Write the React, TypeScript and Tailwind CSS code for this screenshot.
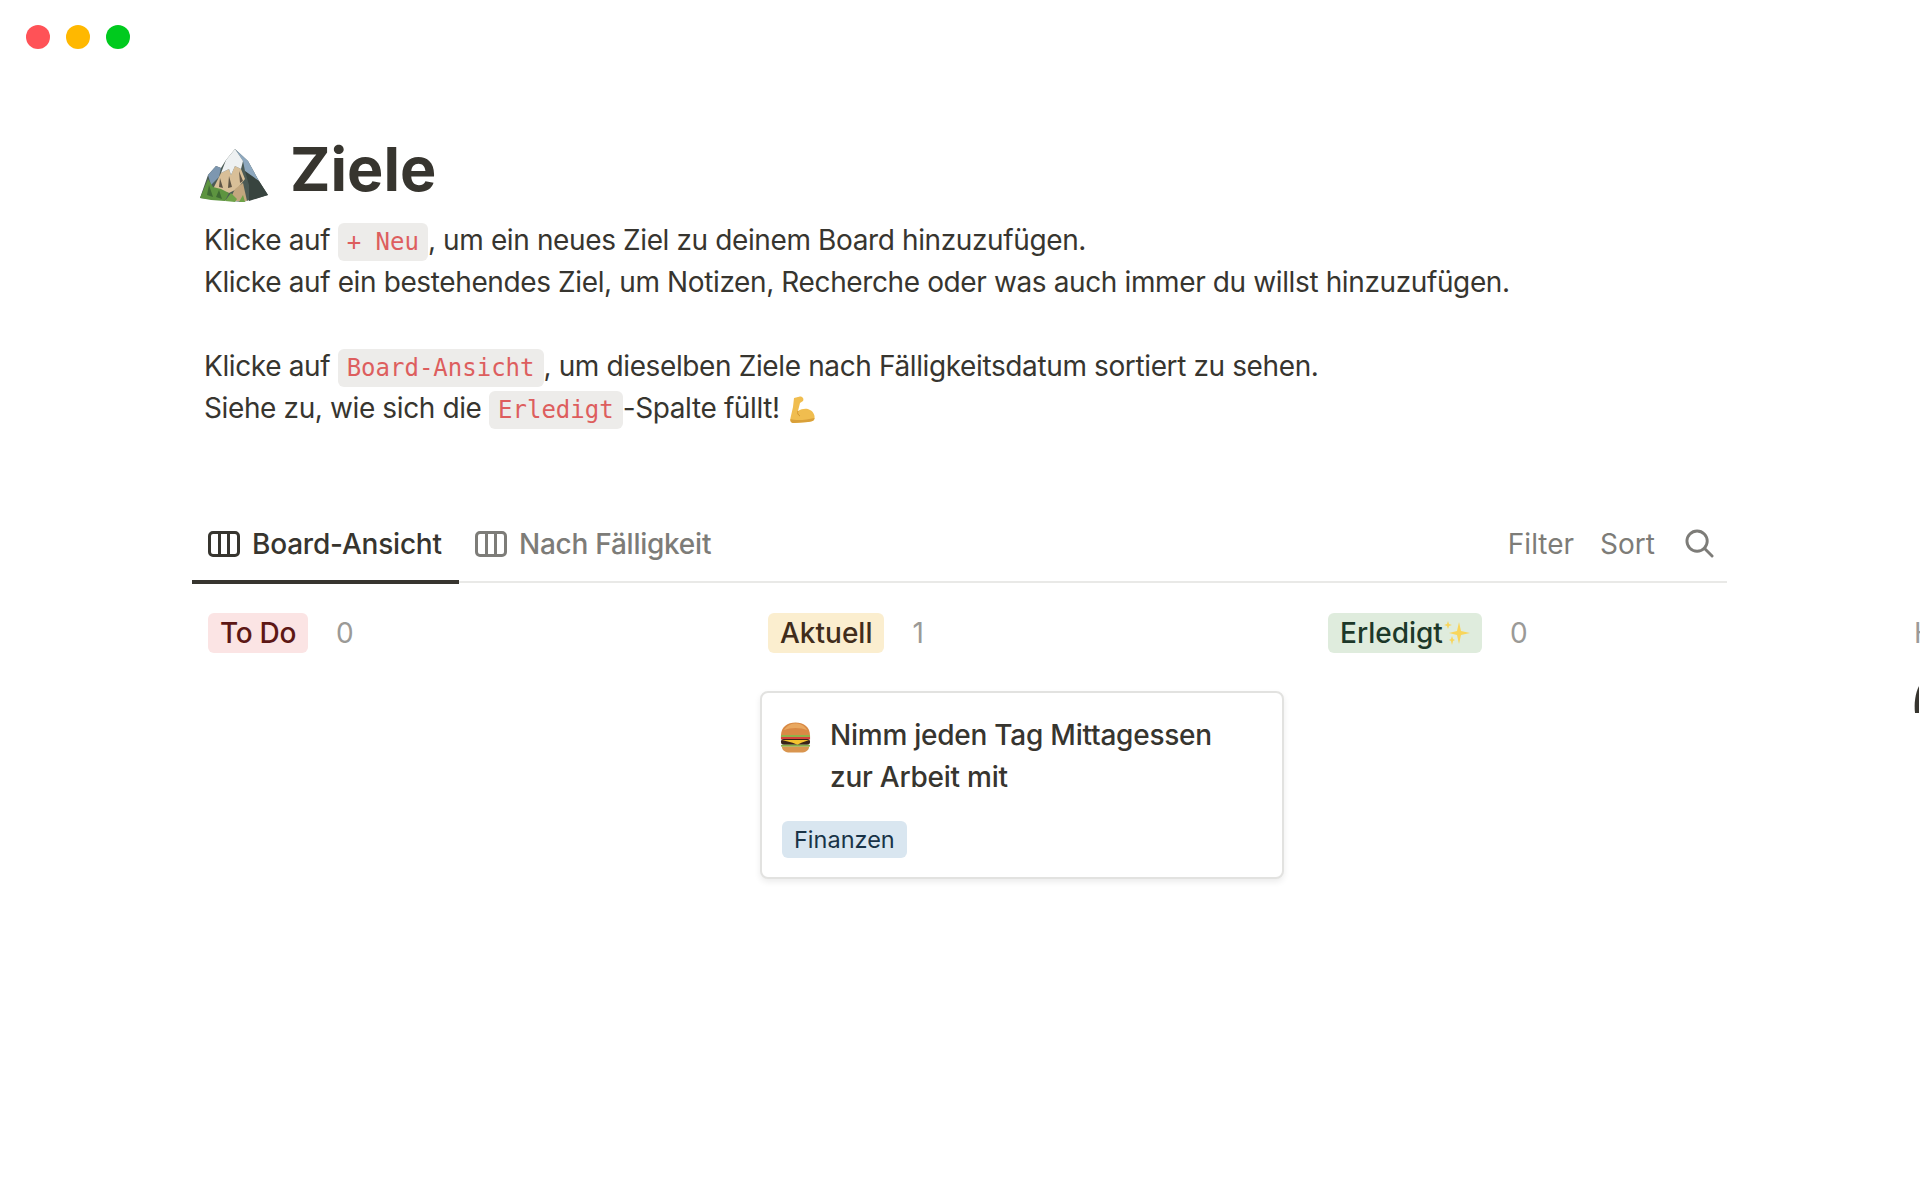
const Code = ({ children }: { children: string }) => (
  <code className="rounded-[6px] bg-[#edecea] px-[9px] py-[5px] font-['DejaVu_Sans_Mono',monospace] text-[24px] leading-none tracking-normal text-[#dd5e5e]">{children}</code>
);

const BoardIcon = () => (
  <svg width="32" height="26" viewBox="0 0 32 26" fill="none" stroke="currentColor" strokeWidth="3">
    <rect x="1.5" y="1.5" width="29" height="23" rx="3.5" />
    <path d="M11.5 2v22M20.5 2v22" />
  </svg>
);

// apple style emoji are not installed, so these are drawn by hand
const Mountain = () => (
  <svg className="mt-[11px]" width="69" height="54" viewBox="0 0 69 54">
    <path d="M1 49 9 26 17 17 22 19 27 11 36 0 49 12 60 32 69 46 44 53Z" fill="#4b5a55" />
    <path d="M36 0 49 12 60 32 52 28 46 22 44 12Z" fill="#8ea8bf" />
    <path d="M9 26 17 17 22 19 20 28 12 36Z" fill="#7d97b0" />
    <path d="M22 24 30 20 32 26 36 17 42 20 46 30 38 40 30 44 14 40Z" fill="#d8bf98" />
    <path d="M36 0 27 11 22 24 30 20 32 26 36 17 42 20 44 12Z" fill="#eef1f2" />
    <path d="M46 22 60 32 69 46 50 52 50 36Z" fill="#38443f" />
    <path d="M36 40 44 34 48 52 30 52Z" fill="#c2a67e" />
    <path d="M40 22 44 32 41 34ZM30 27 33 38 29 39ZM21 29 24 39 20 38Z" fill="#5f5546" />
    <path d="M1 49 9 30 14 38 22 40 30 44 26 52 12 51Z" fill="#5d9440" />
    <path d="M26 52 32 44 38 50 36 53ZM40 53 44 46 46 53Z" fill="#6ea248" />
    <path d="M10 36 14 48 8 46ZM20 41 23 50 17 48Z" fill="#3f6b33" />
  </svg>
);

const Burger = () => (
  <svg width="33" height="33" viewBox="0 0 34 33">
    <path d="M2 15C2 5 9 1 17 1s15 4 15 14Z" fill="#d98a45" />
    <path d="M5 9C9 3 14 2 17 2s9 1 12 7c-7-3-17-3-24 0Z" fill="#e9a860" />
    <rect x="2" y="14" width="30" height="3" rx="1.5" fill="#8fb34a" />
    <rect x="2" y="16" width="30" height="2.5" fill="#d8413a" />
    <rect x="2" y="18" width="30" height="6" rx="3" fill="#3a2318" />
    <path d="M3 19h28l-8 3-4 2-5-2Z" fill="#f4c22f" />
    <rect x="2" y="24" width="30" height="2" rx="1" fill="#86ad45" />
    <path d="M3 26h28c0 4-4 6-8 6H11c-4 0-8-2-8-6Z" fill="#d9954f" />
  </svg>
);

const Muscle = () => (
  <svg className="ml-[10px] inline-block align-[-5px]" width="25" height="27" viewBox="0 0 25 27">
    <path d="M4 2 10 .5C13 .5 14 3 13 5L10 7 8 15C12 12.5 17 12 20 14 24 16 25 20 24.5 23 24 25 22 25.5 18 26L4 27C1 27 0 25 .5 22L3 11Z" fill="#f0bd4f" />
    <path d="M8 15C7 17 8 19 10 20" fill="none" stroke="#d2962f" strokeWidth="1" />
    <path d="M.5 23C6 25 16 24 24.5 22 24 25 22 25.5 18 26L4 27C1 27 0 25 .5 23Z" fill="#d9a03a" />
  </svg>
);

const Sparkles = () => (
  <svg className="ml-[1px]" width="26" height="24" viewBox="0 0 26 24" fill="#f8d55a">
    <path d="M15 1 17 10 26 12 17 14 15 23 13 14 5 12 13 10Z" />
    <path d="M4 0 5 3 8 4 5 5 4 8 3 5 0 4 3 3Z" />
    <path d="M8 15 9 18 11 19 9 20 8 24 7 20 5 19 7 18Z" />
  </svg>
);

const Pill = ({ label, bg, color, children }: { label: string; bg: string; color: string; children?: React.ReactNode }) => (
  <span className={`flex h-10 items-center rounded-[6px] px-3 font-medium ${bg} ${color}`}>
    {label}
    {children}
  </span>
);

const Column = ({ pill, count, children }: { pill: React.ReactNode; count: number; children?: React.ReactNode }) => (
  <div className="w-[524px] shrink-0">
    <div className="ml-2 flex h-10 items-center gap-7">
      {pill}
      <span className="text-[#9b9a97]">{count}</span>
    </div>
    {children}
  </div>
);

export default function App() {
  return (
    <div className="h-[1200px] w-full overflow-hidden bg-white font-['Inter',sans-serif] text-[28px] tracking-[-0.38px] text-[#37352f]">
      <div className="flex gap-4 pl-[26px] pt-[25px]">
        <span className="size-6 rounded-full bg-[#ff5257]" />
        <span className="size-6 rounded-full bg-[#ffb800]" />
        <span className="size-6 rounded-full bg-[#00ca1e]" />
      </div>

      <div className="pl-[192px] pr-[193px]">
        <div className="mt-[83px] flex h-[76px] items-center pl-[7px]">
          <Mountain />
          <h1 className="ml-[22px] text-[61px] font-bold tracking-normal">Ziele</h1>
        </div>

        <div className="mt-[11px] pl-[12px] leading-[42px]">
          <p>Klicke auf <Code>+ Neu</Code>, um ein neues Ziel zu deinem Board hinzuzufügen.</p>
          <p>Klicke auf ein bestehendes Ziel, um Notizen, Recherche oder was auch immer du willst hinzuzufügen.</p>
          <p className="mt-[42px]">Klicke auf <Code>Board-Ansicht</Code>, um dieselben Ziele nach Fälligkeitsdatum sortiert zu sehen.</p>
          <p>Siehe zu, wie sich die <Code>Erledigt</Code>-Spalte füllt!<Muscle /></p>
        </div>

        <div className="mt-[86px] flex h-[68px] items-center justify-between border-b-2 border-[#e9e9e7]">
          <div className="flex h-full">
            <div className="-mb-[3px] flex w-[267px] items-center gap-3 border-b-4 border-[#37352f] pb-[8px] pl-4 font-medium tracking-[-0.2px]">
              <BoardIcon />
              Board-Ansicht
            </div>
            <div className="ml-4 flex items-center gap-3 pb-[8px] font-medium tracking-[-0.25px] text-[#7d7c78]">
              <BoardIcon />
              Nach Fälligkeit
            </div>
          </div>
          <div className="flex items-center gap-7 pb-[9px] pr-[13px] tracking-normal text-[#7d7c78]">
            <span className="-mr-[2px]">Filter</span>
            <span>Sort</span>
            <svg className="ml-[2px]" width="29" height="29" viewBox="0 0 30 30" fill="none" stroke="currentColor" strokeWidth="3" strokeLinecap="round">
              <circle cx="12.5" cy="12.5" r="10.5" />
              <path d="M20 20l8 8" />
            </svg>
          </div>
        </div>
      </div>

      <div className="mt-[30px] flex gap-[36px] pl-[200px]">
        <Column pill={<Pill label="To Do" bg="bg-[#fbe4e4] tracking-[-0.3px]" color="text-[#5d1715]" />} count={0} />
        <Column pill={<Pill label="Aktuell" bg="bg-[#fbeecf] tracking-normal" color="text-[#402c1b]" />} count={1}>
          <div className="mt-[38px] h-[188px] rounded-[8px] border-2 border-[#e2e2e0] bg-white px-[18px] pt-[21px] shadow-[0_3px_6px_rgba(15,15,15,0.08)]">
            <div className="flex">
              <div className="-ml-[1px] w-[51px] pt-[7px]"><Burger /></div>
              <p className="font-medium leading-[42px] tracking-[-0.24px]">Nimm jeden Tag Mittagessen<br />zur Arbeit mit</p>
            </div>
            <span className="ml-[2px] mt-[23px] inline-flex h-[37px] items-center rounded-[6px] bg-[#d9e6f0] px-3 text-[23.5px] tracking-normal text-[#183347]">Finanzen</span>
          </div>
        </Column>
        <Column pill={<Pill label="Erledigt" bg="bg-[#dfecdd] tracking-normal" color="text-[#1c3829]"><Sparkles /></Pill>} count={0} />
        <div className="w-[524px] shrink-0 pl-[34px]">
          <span className="flex h-10 items-center text-[#9b9a97]">Hidden</span>
          <svg className="mt-[33px]" width="24" height="27" viewBox="0 0 24 27" fill="#37352f">
            <path d="M1 27C0 18 1 8 5 0V27Z" />
          </svg>
        </div>
      </div>
    </div>
  );
}
